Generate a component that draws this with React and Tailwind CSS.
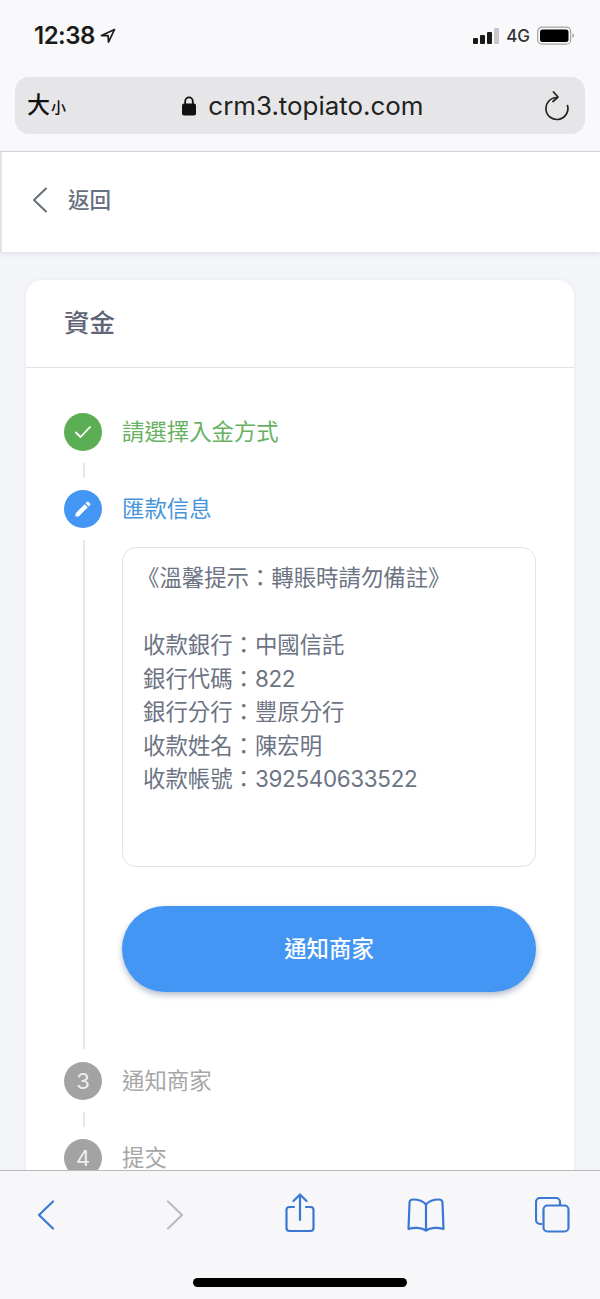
import React from "react";

const cjk = "font-['Inter','Noto_Sans_CJK_TC',sans-serif]";

// full-width colon, as in the page text
const COLON = "\uFF1A";

const bankLines = [
  { label: "收款銀行", value: "中國信託" },
  { label: "銀行代碼", value: "822", digits: true },
  { label: "銀行分行", value: "豐原分行" },
  { label: "收款姓名", value: "陳宏明" },
  { label: "收款帳號", value: "392540633522", digits: true },
];

function Connector() {
  return <div className="ml-[19px] my-3 h-[15px] w-[2px] bg-[#e6e7ea]" />;
}

function StepCircle({ className, children }) {
  return (
    <div className={`flex h-[38px] w-[38px] shrink-0 items-center justify-center rounded-full ${className}`}>
      {children}
    </div>
  );
}

function StatusBar() {
  return (
    <div className="flex h-[72px] items-center justify-between pl-[34px] pr-[25px]">
      <div className="flex items-center gap-[5px]">
        <span className="font-['Inter',sans-serif] text-[24px] leading-none font-semibold tracking-[-0.5px] text-[#1a1a1a]">12:38</span>
        <svg width="16" height="16" viewBox="0 0 16 16" fill="none" stroke="#1a1a1a" strokeWidth="1.7" strokeLinejoin="round">
          <path d="M14.5 1.5 1.5 7.6h6.6l.4 6.6z" />
        </svg>
      </div>
      <div className="flex items-center">
        <svg width="27" height="17" viewBox="0 0 27 17" fill="#1a1a1a" className="mr-[6px]">
          <rect x="0" y="10" width="5" height="6" rx="1" />
          <rect x="7" y="7" width="5" height="9" rx="1" />
          <rect x="14" y="4" width="5" height="12" rx="1" />
          <rect x="21" y="0" width="5" height="16" rx="1" fill="#c9c9cb" />
        </svg>
        <span className="mr-[7px] font-['Inter',sans-serif] text-[17px] leading-none font-medium text-[#333]">4G</span>
        <svg width="38" height="20" viewBox="0 0 38 20" fill="none">
          <rect x="0.7" y="1.2" width="33" height="17" rx="4.5" stroke="#a3a3a5" strokeWidth="1.2" />
          <rect x="3" y="3.5" width="28.5" height="12.5" rx="2.5" fill="#000" />
          <path d="M35.5 7.5c1 .4 1.6 1.2 1.6 2.2s-.6 1.8-1.6 2.2z" fill="#a3a3a5" />
        </svg>
      </div>
    </div>
  );
}

function UrlBar() {
  return (
    <div className="mx-[15px] mt-[5px] flex h-[57px] items-center justify-between rounded-[14px] bg-[#e6e6e8] pl-[12px] pr-[15px]">
      <div className={`flex w-[159px] items-baseline text-[#111] ${cjk}`}>
        <span className="text-[23px] leading-none font-medium">大</span>
        <span className="ml-[1px] text-[15px] leading-none font-medium">小</span>
      </div>
      <div className="flex items-center gap-[12px]">
        <svg width="14" height="20" viewBox="0 0 14 20" fill="#111">
          <path d="M3.2 8V5.2a3.8 3.8 0 0 1 7.6 0V8" fill="none" stroke="#111" strokeWidth="1.8" />
          <rect x="0" y="7.5" width="14" height="12" rx="2" />
        </svg>
        <span className="font-['Inter',sans-serif] text-[25.9px] leading-none text-[#222]">crm3.topiato.com</span>
      </div>
      <div className="flex w-[150px] justify-end">
        <svg width="26" height="30" viewBox="0 0 26 30" fill="none" stroke="#222" strokeWidth="1.7" strokeLinecap="round" strokeLinejoin="round">
          <path d="M13 6.5a11 11 0 1 0 10.5 8" />
          <path d="M9.5 1 14 6l-5 4.5" />
        </svg>
      </div>
    </div>
  );
}

function BottomBar() {
  return (
    <div className="h-[129px] shrink-0 border-t border-[#b9b9bb] bg-[#f7f7f9]">
      <div className="flex h-[87px] items-center pl-[37px]">
        <svg width="18" height="30" viewBox="0 0 18 30" fill="none" stroke="#3a78d4" strokeWidth="2.2" strokeLinecap="round" strokeLinejoin="round">
          <path d="M16 1.5 2 15l14 13.5" />
        </svg>
        <svg width="18" height="30" viewBox="0 0 18 30" fill="none" stroke="#bcbcbe" strokeWidth="2.2" strokeLinecap="round" strokeLinejoin="round" className="ml-[111px]">
          <path d="M2 1.5 16 15 2 28.5" />
        </svg>
        <svg width="30" height="40" viewBox="0 0 30 40" fill="none" stroke="#3a78d4" strokeWidth="2.2" strokeLinecap="round" strokeLinejoin="round" className="ml-[101px] -mt-[3px]">
          <path d="M9 14H4a3 3 0 0 0-2.5 3v18a3 3 0 0 0 3 3h21a3 3 0 0 0 3-3V17a3 3 0 0 0-3-3h-4.500" />
          <path d="M15 27V2M8.500 8 15 1.500 21.500 8" />
        </svg>
        <svg width="38" height="34" viewBox="0 0 38 34" fill="none" stroke="#3a78d4" strokeWidth="2.2" strokeLinecap="round" strokeLinejoin="round" className="ml-[92px]">
          <path d="M19 6.500C16 3 11 1.500 6 1.500 4 1.500 2.500 3 2.500 5L1.500 31c5-1.800 13-1.800 17.500 1.500 4.500-3.300 12.500-3.300 17.500-1.500L35.500 5c0-2-1.500-3.500-3.500-3.500-5 0-10 1.500-13 5z" />
          <path d="M19 6.500V32" />
        </svg>
        <svg width="35" height="36" viewBox="0 0 35 36" fill="none" stroke="#3a78d4" strokeWidth="2.2" strokeLinejoin="round" className="ml-[90px]">
          <path d="M7 27H5a4 4 0 0 1-4-4V5a4 4 0 0 1 4-4h16a4 4 0 0 1 4 4v3" />
          <rect x="8.500" y="8.500" width="25" height="26" rx="4" />
        </svg>
      </div>
      <div className="mx-auto mt-[20px] h-[9px] w-[214px] rounded-full bg-black" />
    </div>
  );
}

export default function App() {
  return (
    <div className={`flex h-[1299px] w-[600px] flex-col overflow-hidden bg-[#f4f5f9] ${cjk}`}>
      {/* Safari top */}
      <div className="h-[152px] shrink-0 border-b border-[#d2d2d5] bg-[#f9f9fb]">
        <StatusBar />
        <UrlBar />
      </div>

      <div className="min-h-0 flex-1 overflow-hidden">
        {/* 返回 */}
        <div className="flex h-[100px] items-center gap-[20px] border-l-2 border-[#e3e3e6] bg-white pb-[4px] pl-[30px] shadow-[0_2px_5px_rgba(90,100,130,0.12)]">
          <svg width="16" height="26" viewBox="0 0 16 26" fill="none" stroke="#666d7c" strokeWidth="2" strokeLinecap="round" strokeLinejoin="round">
            <path d="M14 1.500 2 13l12 11.500" />
          </svg>
          <span className="text-[21.5px] font-medium text-[#697080]">返回</span>
        </div>

        {/* 資金 card */}
        <div className="mx-[26px] mt-[28px] rounded-[16px] bg-white pb-10 shadow-[0_0_4px_rgba(90,100,130,0.08)]">
          <div className="flex h-[88px] items-center border-b border-[#e2e3e8] pl-[38px]">
            <span className="text-[25.5px] font-medium text-[#5f6675]">資金</span>
          </div>

          <div className="px-[38px] pt-[45px]">
            <div className="flex h-[38px] items-center gap-5">
              <StepCircle className="bg-[#5cae55]">
                <svg width="18" height="14" viewBox="0 0 18 14" fill="none" stroke="#fff" strokeWidth="1.800" strokeLinecap="round" strokeLinejoin="round">
                  <path d="M2 7.500 6.500 12 16 2" />
                </svg>
              </StepCircle>
              <span className="text-[22.4px] text-[#68b162]">請選擇入金方式</span>
            </div>
            <Connector />

            <div className="flex h-[38px] items-center gap-5">
              <StepCircle className="bg-[#4496f5]">
                <svg width="20" height="20" viewBox="0 0 24 24" fill="#fff">
                  <path d="M3 17.250V21h3.750L17.810 9.940l-3.750-3.750L3 17.250zM20.710 7.040a1 1 0 0 0 0-1.410l-2.340-2.340a1 1 0 0 0-1.410 0l-1.830 1.830 3.750 3.750 1.830-1.830z" />
                </svg>
              </StepCircle>
              <span className="text-[22.4px] text-[#4a94dc]">匯款信息</span>
            </div>

            {/* 匯款信息 content */}
            <div className="mt-3 ml-[19px] flex border-l-2 border-[#e6e7ea]">
              <div className="ml-[37px] w-[414px] pt-[7px] pb-[57px]">
                <div className="h-[320px] rounded-[14px] border-[1.5px] border-[#e1e2e6] pl-[20px] pt-[13px] text-[22.4px] leading-[33.5px] text-[#6c7483]">
                  <p className="-ml-[6px]">{`《溫馨提示${COLON}轉賬時請勿備註》`}</p>
                  <p className="h-[33.5px]" />
                  {bankLines.map((line) => (
                    <p key={line.label}>
                      {line.label}
                      {COLON}
                      <span className={line.digits ? "tracking-[-0.3px]" : ""}>{line.value}</span>
                    </p>
                  ))}
                </div>
                <button className="mt-[39px] h-[86px] w-full rounded-full bg-[#4496f5] text-[22.4px] font-medium text-white shadow-[0_3px_6px_rgba(40,60,100,0.35)]">
                  通知商家
                </button>
              </div>
            </div>

            <div className="mt-[13px] flex h-[38px] items-center gap-5">
              <StepCircle className="bg-[#a3a3a3]">
                <span className="text-[22px] text-[#eee]">3</span>
              </StepCircle>
              <span className="text-[22.4px] text-[#a6a6a6]">通知商家</span>
            </div>
            <Connector />
            <div className="flex h-[38px] items-center gap-5">
              <StepCircle className="bg-[#a3a3a3]">
                <span className="text-[22px] text-[#eee]">4</span>
              </StepCircle>
              <span className="text-[22.4px] text-[#a6a6a6]">提交</span>
            </div>
          </div>
        </div>
      </div>

      <BottomBar />
    </div>
  );
}
